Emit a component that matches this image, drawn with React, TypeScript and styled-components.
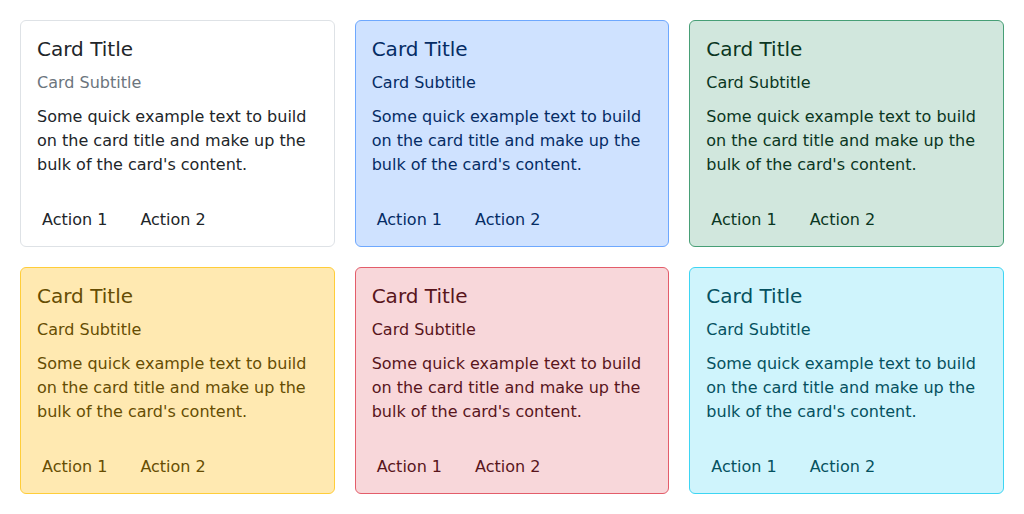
import { createGlobalStyle, styled } from "styled-components";

const GlobalStyle = createGlobalStyle`
  body {
    margin: 0;
    background: #fff;
    font-family: "DejaVu Sans", "Liberation Sans", sans-serif;
  }
`;

type Variant = "light" | "primary" | "success" | "warning" | "danger" | "info";

interface Palette {
  bg: string;
  border: string;
  text: string;
  muted: string;
}

const palettes: Record<Variant, Palette> = {
  light: { bg: "#ffffff", border: "#dee2e6", text: "#212529", muted: "#6c757d" },
  primary: { bg: "#cfe2ff", border: "#6ea8fe", text: "#052c65", muted: "#052c65" },
  success: { bg: "#d1e7dd", border: "#479f76", text: "#0a3622", muted: "#0a3622" },
  warning: { bg: "#ffe9b1", border: "#ffcd39", text: "#664d03", muted: "#664d03" },
  danger: { bg: "#f8d7da", border: "#e35d6a", text: "#58151c", muted: "#58151c" },
  info: { bg: "#cff4fc", border: "#3dd5f3", text: "#055160", muted: "#055160" },
};

const Grid = styled.div`
  display: grid;
  grid-template-columns: repeat(3, 1fr);
  gap: 20px;
  padding: 20px;
`;

const Card = styled.div<{ $variant: Variant }>`
  display: flex;
  flex-direction: column;
  background: ${(p) => palettes[p.$variant].bg};
  border: 1px solid ${(p) => palettes[p.$variant].border};
  border-radius: 6px;
  color: ${(p) => palettes[p.$variant].text};
  padding: 16px 16px 10px;
`;

const Title = styled.h5`
  margin: 0;
  font-size: 20px;
  font-weight: 400;
  line-height: 24px;
`;

const Subtitle = styled.h6<{ $variant: Variant }>`
  margin: 10px 0 0;
  font-size: 16px;
  font-weight: 400;
  line-height: 24px;
  color: ${(p) => palettes[p.$variant].muted};
`;

const Text = styled.p`
  margin: 10px 0 0;
  font-size: 16px;
  line-height: 24px;
`;

const Actions = styled.div`
  display: flex;
  gap: 23px;
  margin-top: 27px;
`;

const ActionButton = styled.button`
  background: none;
  border: none;
  padding: 4px 5px;
  font-family: inherit;
  font-size: 16px;
  line-height: 24px;
  color: inherit;
  cursor: pointer;
`;

const variants: Variant[] = ["light", "primary", "success", "warning", "danger", "info"];

export default function App() {
  return (
    <>
      <GlobalStyle />
      <Grid>
        {variants.map((v) => (
          <Card key={v} $variant={v}>
            <Title>Card Title</Title>
            <Subtitle $variant={v}>Card Subtitle</Subtitle>
            <Text>
              Some quick example text to build on the card title and make up the
              bulk of the card's content.
            </Text>
            <Actions>
              <ActionButton>Action 1</ActionButton>
              <ActionButton>Action 2</ActionButton>
            </Actions>
          </Card>
        ))}
      </Grid>
    </>
  );
}
